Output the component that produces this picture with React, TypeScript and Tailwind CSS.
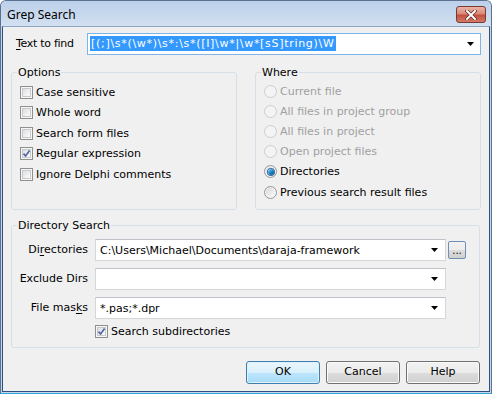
import React from "react";

function CheckBox({ checked }: { checked?: boolean }) {
  return (
    <span className="flex h-[13px] w-[13px] shrink-0 border border-[#8e8f8f] bg-[#f6f6f6] p-[1px]">
      <span className="relative flex-1 border border-[#c6c9cd] bg-gradient-to-br from-[#dedede] to-[#fcfcfc]">
        {checked && (
          <svg viewBox="0 0 9 9" className="absolute left-[-1px] top-[-1px] h-[9px] w-[9px]">
            <path d="M1.5 4.6 L3.6 7 L7.6 1.6" fill="none" stroke="#4d64a3" strokeWidth="1.6" />
          </svg>
        )}
      </span>
    </span>
  );
}

function Radio({ checked, disabled }: { checked?: boolean; disabled?: boolean }) {
  return (
    <span
      className={
        disabled
          ? "flex h-[13px] w-[13px] shrink-0 items-center justify-center rounded-full border border-[#cdcdcd] bg-[#f4f4f4]"
          : "flex h-[13px] w-[13px] shrink-0 items-center justify-center rounded-full border border-[#979797] bg-gradient-to-br from-[#d6d6d6] to-[#fcfcfc] shadow-[inset_0_0_0_1px_#f4f4f4]"
      }
    >
      {checked && (
        <span className="h-[6px] w-[6px] rounded-full bg-gradient-to-br from-[#8bdcff] via-[#1f86cf] to-[#0c4684] shadow-[0_0_0_1px_#3a6fa0]" />
      )}
    </span>
  );
}

function Arrow() {
  return (
    <svg viewBox="0 0 7 4" className="h-[4px] w-[7px] shrink-0">
      <path d="M0 0 H7 L3.5 4 Z" fill="#000" />
    </svg>
  );
}

function Combo({ value, width }: { value?: string; width: string }) {
  return (
    <div
      className={`flex h-[22px] ${width} items-center border border-[#d3d6db] border-t-[#bfc3c9] bg-white pl-[4px] pr-[7px]`}
    >
      <span className="flex-1 truncate leading-[13px]">{value}</span>
      <Arrow />
    </div>
  );
}

function Button({ label, primary }: { label: string; primary?: boolean }) {
  return (
    <div
      className={
        primary
          ? "flex h-[23px] w-[74px] items-center justify-center rounded-[3px] border border-[#3c7fb1] bg-[linear-gradient(#eaf6fd_0%,#d9f0fc_50%,#bee6fd_51%,#a7d9f5_100%)] shadow-[inset_0_0_0_1px_#dff1fb]"
          : "flex h-[23px] w-[74px] items-center justify-center rounded-[3px] border border-[#707070] bg-[linear-gradient(#f2f2f2_0%,#ebebeb_50%,#dddddd_51%,#cfcfcf_100%)] shadow-[inset_0_0_0_1px_#fbfbfb]"
      }
    >
      {label}
    </div>
  );
}

export default function App() {
  const options = [
    { label: "Case sensitive" },
    { label: "Whole word" },
    { label: "Search form files" },
    { label: "Regular expression", checked: true },
    { label: "Ignore Delphi comments" },
  ];
  const where = [
    { label: "Current file", disabled: true },
    { label: "All files in project group", disabled: true },
    { label: "All files in project", disabled: true },
    { label: "Open project files", disabled: true },
    { label: "Directories", checked: true },
    { label: "Previous search result files" },
  ];

  return (
    <div className="flex h-[394px] w-[492px] flex-col overflow-hidden rounded-t-[6px] border border-[#5d7290] border-b-[#35a6d8] bg-[#c6d8ed] font-['DejaVu_Sans',sans-serif] text-[11px] text-black">
      {/* Title bar */}
      <div className="flex h-[25px] shrink-0 items-center justify-between bg-gradient-to-b from-[#bcd0e9] to-[#d2e0f1] pl-[6px] pr-[5px]">
        <span className="mt-[2px] font-['Noto_Sans',sans-serif] text-[12px] leading-[16px] text-black">
          Grep Search
        </span>
        <div className="mt-[2px] flex h-[17px] w-[30px] items-center justify-center rounded-[3px] border border-[#7a3a32] bg-[linear-gradient(#eab4a6_0%,#d98a79_45%,#c4503d_55%,#d27a66_100%)]">
          <svg viewBox="0 0 12 10" className="h-[10px] w-[12px]">
            <path d="M2 1 L10 9 M10 1 L2 9" stroke="#5b2a24" strokeWidth="3.4" strokeLinecap="square" />
            <path d="M2 1 L10 9 M10 1 L2 9" stroke="#fff" strokeWidth="2" strokeLinecap="square" />
          </svg>
        </div>
      </div>

      {/* Client area */}
      <div className="mx-[1px] mb-[1px] flex flex-1 flex-col border border-[#2d4f80] border-t-[#8ea6c4] bg-[#f0f0f0] pl-[8px]">
        {/* Text to find */}
        <div className="mt-[6px] flex items-center">
          <span className="ml-[5px] w-[71px] shrink-0 tracking-[-0.3px]">
            <span className="underline underline-offset-2">T</span>ext to find
          </span>
          <div className="flex h-[22px] w-[394px] items-center border border-[#7eb4ea] bg-white pl-[2px] pr-[6px]">
            <span className="flex-1">
              <span className="bg-[#3399ff] px-[1px] py-[1px] leading-[15px] tracking-[0.7px] text-white">
                [(;]\s*(\w*)\s*:\s*([I]\w*|\w*[sS]tring)\W
              </span>
            </span>
            <Arrow />
          </div>
        </div>

        {/* Options + Where */}
        <div className="mt-[11px] flex gap-[18px]">
          <fieldset className="h-[144px] w-[226px] rounded-[3px] border border-[#d5dfe5] pl-[5px] pt-[3px]">
            <legend className="px-[1px] leading-[13px]">Options</legend>
            <div className="ml-[3px] flex flex-col">
              {options.map((o) => (
                <div key={o.label} className="flex h-[20.5px] items-center gap-[3px]">
                  <CheckBox checked={o.checked} />
                  <span className="leading-[13px]">{o.label}</span>
                </div>
              ))}
            </div>
          </fieldset>
          <fieldset className="h-[144px] w-[226px] rounded-[3px] border border-[#d5dfe5] pl-[5px] pt-[2px]">
            <legend className="px-[1px] leading-[13px]">Where</legend>
            <div className="ml-[3px] flex flex-col">
              {where.map((w) => (
                <div key={w.label} className="flex h-[20.2px] items-center gap-[3px]">
                  <Radio checked={w.checked} disabled={w.disabled} />
                  <span className={w.disabled ? "leading-[13px] text-[#a0a0a0]" : "leading-[13px]"}>
                    {w.label}
                  </span>
                </div>
              ))}
            </div>
          </fieldset>
        </div>

        {/* Directory Search */}
        <fieldset className="mt-[9px] h-[129px] w-[469px] rounded-[3px] border border-[#d5dfe5] pl-[5px] pt-[7px]">
          <legend className="px-[1px] leading-[13px]">Directory Search</legend>
          <div className="flex flex-col gap-[7px]">
            <div className="flex items-center">
              <span className="w-[72px] pr-[1px] text-right">
                Di<span className="underline underline-offset-2">r</span>ectories
              </span>
              <div className="ml-[6px]">
                <Combo value="C:\Users\Michael\Documents\daraja-framework" width="w-[351px]" />
              </div>
              <div className="ml-[2px] flex h-[18px] w-[18px] items-end justify-center rounded-[2px] border border-[#6f8fb0] bg-[linear-gradient(#f2f2f2_0%,#ebebeb_50%,#dddddd_51%,#cfcfcf_100%)] pb-[2px] text-[10px] leading-[10px]">
                ...
              </div>
            </div>
            <div className="flex items-center">
              <span className="w-[72px] pr-[1px] text-right">Exclude Dirs</span>
              <div className="ml-[6px]">
                <Combo width="w-[351px]" />
              </div>
            </div>
            <div className="flex items-center">
              <span className="w-[72px] pr-[1px] text-right">
                File mas<span className="underline underline-offset-2">k</span>s
              </span>
              <div className="ml-[6px]">
                <Combo value="*.pas;*.dpr" width="w-[351px]" />
              </div>
            </div>
          </div>
          <div className="ml-[78px] mt-[6px] flex h-[13px] items-center gap-[3px]">
            <CheckBox checked />
            <span className="leading-[13px]">Search subdirectories</span>
          </div>
        </fieldset>

        {/* Buttons */}
        <div className="mt-[13px] flex w-[469px] justify-end gap-[6px]">
          <Button label="OK" primary />
          <Button label="Cancel" />
          <Button label="Help" />
        </div>
      </div>
    </div>
  );
}
